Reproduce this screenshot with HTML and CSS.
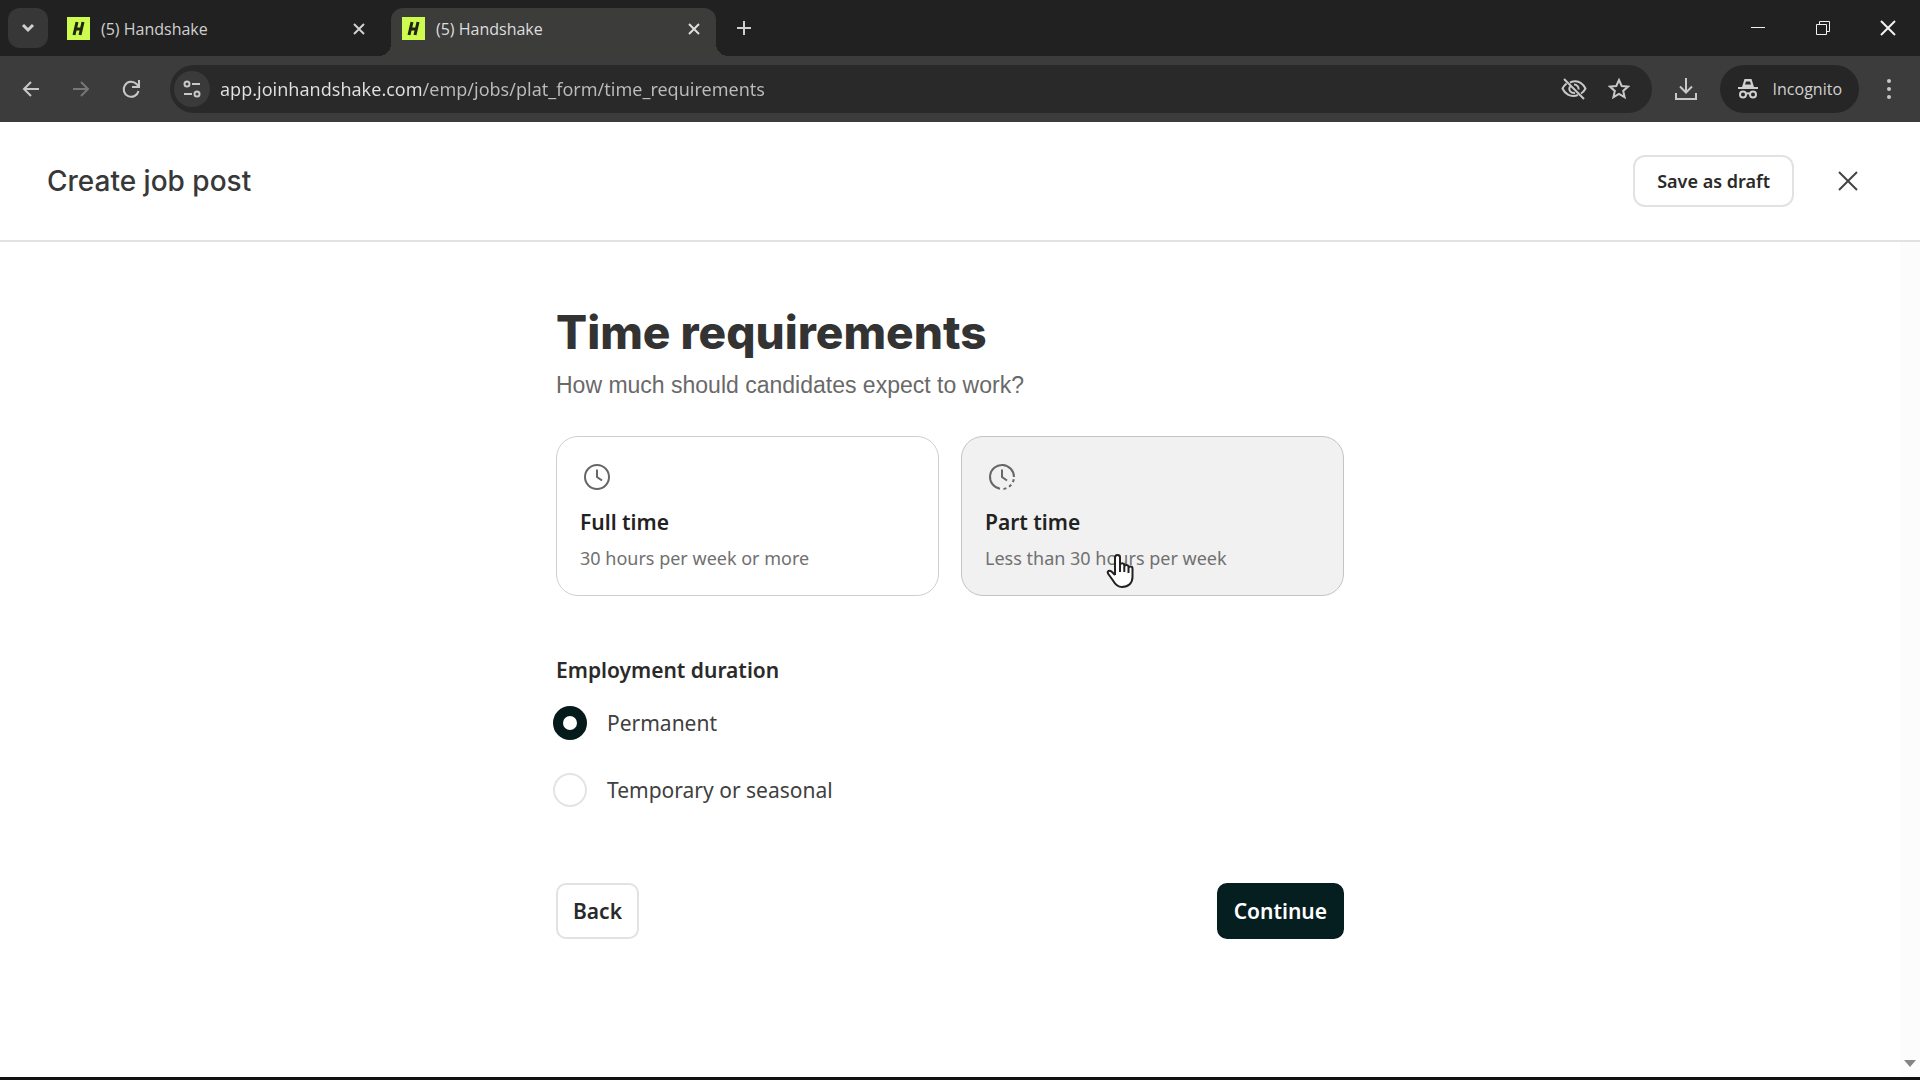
FILE: index.html
```html
<!DOCTYPE html>
<html lang="en">
<head>
  <meta charset="UTF-8">
  <title>(5) Handshake</title>
  <link rel="stylesheet" href="styles.css">
</head>
<body>

<div class="tab-strip">
  <button class="tab-search" aria-label="Search tabs">
    <svg width="14" height="10" viewBox="0 0 14 10"><path d="M2 2l5 5 5-5"/></svg>
  </button>
  <div class="tab">
    <svg class="favicon" width="23" height="23" viewBox="0 0 23 23"><rect width="23" height="23"/><path d="M10 5L7 18M16 5l-3 13M8 12h7"/></svg>
    <span class="tab-title">(5) Handshake</span>
    <button class="tab-close" aria-label="Close tab">
      <svg width="12" height="12" viewBox="0 0 12 12"><path d="M1 1l10 10M11 1L1 11"/></svg>
    </button>
  </div>
  <div class="tab active">
    <svg class="favicon" width="23" height="23" viewBox="0 0 23 23"><rect width="23" height="23"/><path d="M10 5L7 18M16 5l-3 13M8 12h7"/></svg>
    <span class="tab-title">(5) Handshake</span>
    <button class="tab-close" aria-label="Close tab">
      <svg width="12" height="12" viewBox="0 0 12 12"><path d="M1 1l10 10M11 1L1 11"/></svg>
    </button>
  </div>
  <button class="new-tab" aria-label="New tab">
    <svg width="16" height="16" viewBox="0 0 16 16"><path d="M8 1v14M1 8h14"/></svg>
  </button>
  <div class="window-buttons">
    <button aria-label="Minimize"><svg width="16" height="16" viewBox="0 0 16 16"><path d="M1 7.500h14"/></svg></button>
    <button aria-label="Restore"><svg width="16" height="16" viewBox="0 0 16 16"><path d="M1.500 4.500h10v10h-10zM4.500 4.500v-3h10v10h-3"/></svg></button>
    <button aria-label="Close"><svg width="16" height="16" viewBox="0 0 16 16"><path d="M1 1l14 14M15 1L1 15"/></svg></button>
  </div>
</div>

<div class="toolbar">
  <button class="nav-btn" aria-label="Back">
    <svg width="20" height="20" viewBox="0 0 20 20"><path d="M18 10H3M10 3l-7 7 7 7"/></svg>
  </button>
  <button class="nav-btn disabled" aria-label="Forward" disabled>
    <svg width="20" height="20" viewBox="0 0 20 20"><path d="M2 10h15M10 3l7 7-7 7"/></svg>
  </button>
  <button class="nav-btn" aria-label="Reload">
    <svg width="20" height="20" viewBox="0 0 20 20"><path d="M17.500 12A7.500 7.500 0 1 1 15.500 5L18 7.500M18 1v7h-7"/></svg>
  </button>
  <div class="address-bar">
    <button class="site-info" aria-label="View site information">
      <svg width="20" height="20" viewBox="0 0 20 20"><circle cx="5" cy="5" r="2.500"/><path d="M10 5h8M2 15h8"/><circle cx="15" cy="15" r="2.500"/></svg>
    </button>
    <input class="url" type="text" aria-label="Address" value="app.joinhandshake.com/emp/jobs/plat_form/time_requirements">
    <button class="bar-btn" aria-label="Third-party cookies blocked">
      <svg width="26" height="22" viewBox="0 0 26 22"><path d="M9 4.500C17 1 22 6 24.500 10.500c-1 2-2.500 3.800-4.500 5M17 17C9 20 3.500 15 1.500 10.500 2.500 8.500 4 6.800 5.500 5.500M9 8.500c-2 4 1 7 5 6.500M13 6.500c3 0 5 2.500 4.500 5M3 1l20 20"/></svg>
    </button>
    <button class="bar-btn" aria-label="Bookmark this tab">
      <svg width="22" height="22" viewBox="0 0 22 22"><path d="M11 2l2.700 6 6.300.600-4.800 4.300 1.400 6.300L11 16l-5.600 3.200 1.400-6.300L2 8.600 8.300 8z"/></svg>
    </button>
  </div>
  <button class="download" aria-label="Downloads">
    <svg width="24" height="24" viewBox="0 0 24 24"><path d="M12 1v14M6 9.500l6 6 6-6M2 16v6h20v-6"/></svg>
  </button>
  <button class="incognito">
    <svg width="22" height="20" viewBox="0 0 22 20"><path class="hat" d="M7.500 0h7l2.500 8H5z"/><path d="M1 9h20M9 15q2-1.500 4 0"/><path class="band" d="M9 2.500h4l1 3H8z"/><circle cx="6" cy="15.500" r="3"/><circle cx="16" cy="15.500" r="3"/></svg>
    Incognito
  </button>
  <button class="menu-btn" aria-label="Menu">
    <svg width="6" height="22" viewBox="0 0 6 22"><circle cx="3" cy="3" r="2"/><circle cx="3" cy="11" r="2"/><circle cx="3" cy="19" r="2"/></svg>
  </button>
</div>

<header class="page-header">
  <h2>Create job post</h2>
  <button class="btn btn-draft">Save as draft</button>
  <button class="close-form" aria-label="Close">
    <svg width="20" height="20" viewBox="0 0 20 20"><path d="M1 1l18 18M19 1L1 19"/></svg>
  </button>
</header>

<div class="page-body">
  <main>
    <form class="time-form">
      <h1>Time requirements</h1>
      <p class="subtitle">How much should candidates expect to work?</p>

      <div class="cards">
        <button type="button" class="card">
          <svg width="34" height="34" viewBox="0 0 34 34"><circle cx="17" cy="17" r="12"/><path d="M17 9.500V17l5 3.500"/></svg>
          <strong>Full time</strong>
          <span>30 hours per week or more</span>
        </button>
        <button type="button" class="card hovered">
          <svg width="34" height="34" viewBox="0 0 34 34"><path d="M29 17A12 12 0 1 0 15 28.800"/><path class="dots" d="M18.500 28.900A12 12 0 0 0 29 17"/><path d="M17 9.500V17l5 3.500"/></svg>
          <strong>Part time</strong>
          <span>Less than 30 hours per week</span>
          <!-- mouse pointer -->
          <svg class="pointer" width="28" height="36" viewBox="0 0 28 36"><path d="M9 22V4.500a2.500 2.500 0 0 1 5 0V14v-2a2.200 2.200 0 0 1 4.300 0v3-1.500a2.200 2.200 0 0 1 4.200 0V16v-.500a2 2 0 0 1 4 0V24c0 6-4 10-10.500 10-5 0-7-3-9-6.500L2 20.500c-1-2.500 1.500-3.500 3.500-2L9 22M14 13v6M18.300 14v5M22.500 15v5"/></svg>
        </button>
      </div>

      <fieldset>
        <legend>Employment duration</legend>
        <label class="radio"><input type="radio" name="duration" checked> Permanent</label>
        <label class="radio"><input type="radio" name="duration"> Temporary or seasonal</label>
      </fieldset>

      <div class="actions">
        <button type="button" class="btn">Back</button>
        <button type="button" class="btn btn-primary">Continue</button>
      </div>
    </form>
  </main>
  <div class="scroll-track">
    <svg width="12" height="7" viewBox="0 0 12 7"><path d="M0 0h12L6 7z"/></svg>
  </div>
</div>

</body>
</html>
```
FILE: styles.css
```css
* {
  box-sizing: border-box;
}

body {
  margin: 0;
  min-height: 100vh;
  display: flex;
  flex-direction: column;
  font-family: "Noto Sans", "Open Sans", sans-serif;
  background: #fff;
  color: #222;
  border-bottom: 3px solid #111;
}

button,
input {
  font-family: inherit;
}

button {
  display: flex;
  align-items: center;
  justify-content: center;
  padding: 0;
  border: 0;
  background: none;
  color: inherit;
}

svg {
  display: block;
  flex: none;
  fill: none;
  stroke: currentColor;
  stroke-width: 2;
}

/* Tabs */
.tab-strip {
  display: flex;
  align-items: flex-start;
  height: 56px;
  padding: 8px 0 0 8px;
  background: #212121;
  color: #d0d0d0;
}

.tab-search {
  width: 40px;
  height: 40px;
  border-radius: 12px;
  background: #373737;
}

.tab-search svg {
  stroke-width: 3;
}

.tab {
  display: flex;
  align-items: center;
  gap: 11px;
  width: 325px;
  height: 48px;
  padding: 0 16px 7px 11px;
  margin-left: 8px;
  border-radius: 12px 12px 0 0;
  font-family: "Open Sans", sans-serif;
  font-size: 16px;
}

.tab + .tab {
  margin-left: 10px;
}

.tab.active {
  position: relative;
  background: #3c3c3b;
  color: #dedede;
}

.tab.active::before,
.tab.active::after {
  content: "";
  position: absolute;
  bottom: 0;
  width: 12px;
  height: 12px;
}

.tab.active::before {
  right: 100%;
  background: radial-gradient(circle at 0 0, transparent 12px, #3c3c3b 12px);
}

.tab.active::after {
  left: 100%;
  background: radial-gradient(circle at 100% 0, transparent 12px, #3c3c3b 12px);
}

.favicon {
  stroke: #20250f;
  stroke-width: 3;
}

.favicon rect {
  fill: #cdfb4f;
  stroke: none;
}

.tab-title {
  flex: 1;
}

.tab-close {
  width: 12px;
  height: 24px;
}

.new-tab {
  width: 32px;
  height: 40px;
  margin-left: 12px;
}

.window-buttons {
  display: flex;
  margin-left: auto;
  color: #f0f0f0;
}

.window-buttons button {
  width: 65px;
  height: 40px;
}

.window-buttons svg {
  stroke-width: 1;
}

.window-buttons button:last-child svg {
  stroke-width: 2;
}

/* Toolbar */
.toolbar {
  display: flex;
  align-items: center;
  height: 66px;
  padding: 0 15px 0 6px;
  background: #3c3c3c;
  color: #c8c8c8;
}

.nav-btn {
  width: 50px;
  height: 40px;
}

.nav-btn.disabled {
  color: #777;
}

.address-bar {
  display: flex;
  align-items: center;
  flex: 1;
  height: 48px;
  margin-left: 14px;
  padding: 0 20px 0 4px;
  border-radius: 24px;
  background: #292929;
}

.site-info {
  width: 36px;
  height: 36px;
  border-radius: 50%;
  background: #3a3a3a;
}

/* host is brighter than the path */
.url {
  flex: 1;
  min-width: 0;
  margin: 0 10px;
  padding: 0;
  border: 0;
  font-size: 18px;
  color: transparent;
  background: linear-gradient(to right, #e2e2e2 202px, #bcbcbc 202px);
  background-clip: text;
  outline: 0;
}

.bar-btn {
  width: 26px;
  height: 36px;
}

.bar-btn + .bar-btn {
  margin-left: 19px;
}

.download {
  width: 68px;
  height: 40px;
}

.incognito {
  gap: 14px;
  height: 48px;
  padding: 0 17px;
  border-radius: 24px;
  background: #262626;
  color: #d0d0d0;
  font-family: "Open Sans", sans-serif;
  font-size: 16px;
}

.incognito .hat {
  fill: currentColor;
  stroke: none;
}

.incognito .band {
  fill: #262626;
  stroke: none;
}

.menu-btn {
  width: 32px;
  height: 40px;
  margin-left: 14px;
}

.menu-btn circle {
  fill: currentColor;
  stroke: none;
}

/* Page header */
.page-header {
  display: flex;
  align-items: center;
  height: 120px;
  padding: 0 52px 0 47px;
  border-bottom: 2px solid #e2e2e2;
}

h2 {
  flex: 1;
  margin: 0;
  font-family: Inter, "Liberation Sans", sans-serif;
  font-size: 28px;
  font-weight: 500;
  color: #383838;
}

.btn {
  height: 56px;
  padding: 0 15px;
  border: 2px solid #e2e2e2;
  border-radius: 10px;
  background: #fff;
  font-size: 21px;
  font-weight: 600;
  color: #2a2a2a;
}

.btn-draft {
  height: 52px;
  padding: 0 22px;
  border-radius: 12px;
  font-size: 18px;
}

.close-form {
  width: 40px;
  height: 40px;
  margin-left: 34px;
  color: #444;
}

/* Form */
.page-body {
  display: flex;
  flex: 1;
}

main {
  flex: 1;
}

.time-form {
  max-width: 788px;
  margin: 0 auto;
  padding-top: 62px;
}

h1 {
  margin: 0;
  font-family: Inter, "Liberation Sans", sans-serif;
  font-size: 46px;
  font-weight: 800;
  line-height: 56px;
  color: #333;
}

.subtitle {
  margin: 9px 0 35px;
  font-family: "Liberation Sans", Arial, sans-serif;
  font-size: 23px;
  line-height: 32px;
  color: #696969;
}

.cards {
  display: grid;
  grid-template-columns: 1fr 1fr;
  gap: 22px;
}

.card {
  position: relative;
  flex-direction: column;
  align-items: flex-start;
  justify-content: flex-start;
  height: 160px;
  padding: 23px;
  border: 1px solid #cfcfcf;
  border-radius: 22px;
  background: #fff;
  text-align: left;
}

.card.hovered {
  background: #f1f1f1;
  border-color: #c4c4c4;
}

.card > svg {
  color: #666;
}

.card .dots {
  stroke-dasharray: 3 3;
}

.card strong {
  margin-top: 14px;
  font-size: 21px;
  font-weight: 600;
  line-height: 28px;
  color: #222;
}

.card span {
  margin-top: 9px;
  font-size: 18px;
  line-height: 26px;
  color: #707070;
}

.card .pointer {
  position: absolute;
  top: 116px;
  left: 144px;
  fill: #fff;
  color: #222;
}

fieldset {
  margin: 60px 0 0;
  padding: 0;
  border: 0;
}

legend {
  padding: 0;
  font-size: 21px;
  font-weight: 600;
  line-height: 28px;
  color: #2a2a2a;
}

.radio {
  display: flex;
  align-items: center;
  gap: 20px;
  height: 34px;
  margin: 22px 0 0 -3px;
  font-size: 21px;
  color: #404040;
}

.radio + .radio {
  margin-top: 33px;
}

.radio input {
  appearance: none;
  width: 34px;
  height: 34px;
  margin: 0;
  border: 2px solid #e4e4e4;
  border-radius: 50%;
  background: #fff;
}

.radio input:checked {
  border: 10px solid #051a1a;
}

.actions {
  display: flex;
  justify-content: space-between;
  margin-top: 76px;
}

.btn-primary {
  border-color: #051e1f;
  background: #051e1f;
  color: #fff;
}

.scroll-track {
  display: flex;
  align-items: flex-end;
  justify-content: center;
  width: 20px;
  padding-bottom: 10px;
  background: #fcfcfc;
}

.scroll-track path {
  fill: #858585;
  stroke: none;
}
```
